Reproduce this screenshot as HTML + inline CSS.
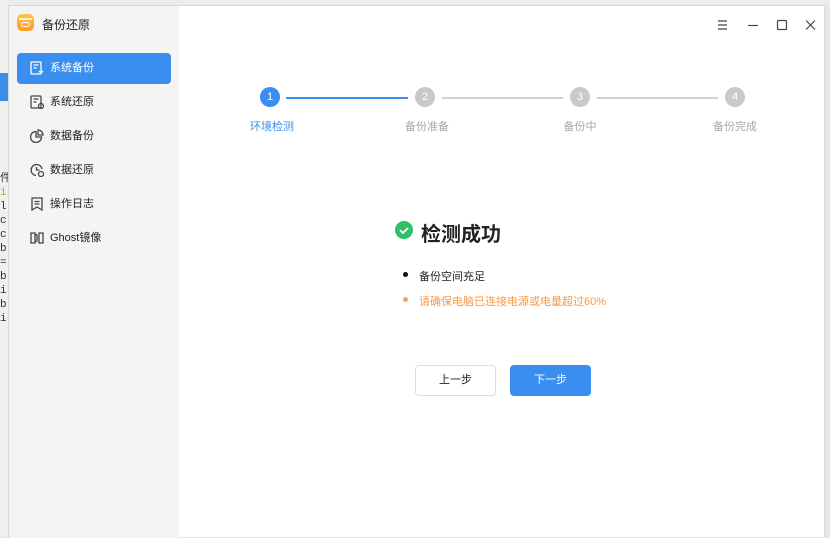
<!DOCTYPE html>
<html><head><meta charset="utf-8"><style>
*{margin:0;padding:0;box-sizing:border-box}
body{width:830px;height:537px;overflow:hidden;background:#e6e6e6;position:relative;font-family:"Liberation Sans","Noto Sans CJK SC",sans-serif}
.bg1{position:absolute;left:0;top:0;width:830px;height:5px;background:#ececec}
.bg2{position:absolute;left:0;top:0;width:8px;height:537px;background:#f0f0f0}
.bgblue{position:absolute;left:0;top:73px;width:8px;height:28px;background:#3a8ee6}
.term{position:absolute;left:0;top:172px;font:11px "Liberation Mono",monospace;color:#333;line-height:14px;width:8px;overflow:hidden}
.win{position:absolute;left:8px;top:5px;width:817px;height:532px;background:#fff;border:1px solid #d8d8d8;border-bottom:none}
.side{position:absolute;left:0;top:0;width:170px;height:532px;background:#f4f4f4}
.logo{position:absolute;left:8px;top:8px;width:17px;height:17px;border-radius:5px;background:linear-gradient(#ffc24d,#ff9a1f)}
.title{position:absolute;left:33px;top:10px;font-size:12px;color:#222}
.item{position:absolute;left:8px;width:154px;height:31px;border-radius:4px;font-size:11px;color:#222;line-height:31px;padding-left:33px}
.item.act{background:#3a8ef0;color:#fff}
.item svg{position:absolute;left:13px;top:8px}
.step{position:absolute;width:20px;height:20px;border-radius:50%;background:#c9c9c9;color:#fff;font-size:11px;text-align:center;line-height:20px;top:81px}
.lab{position:absolute;top:112px;font-size:11px;color:#a8a8a8;width:80px;text-align:center}
.line{position:absolute;top:91px;height:2px;background:#d0d0d0}
.btn{position:absolute;top:359px;width:81px;height:31px;border-radius:4px;font-size:11px;text-align:center;line-height:29px}
</style></head><body>
<div class="bg1"></div><div class="bg2"></div><div class="bgblue"></div>
<div class="term">件<br><span style="color:#7c0">i</span><br>l<br>c<br>c<br>b<br>=<br>b<br>i<br>b<br>i</div>
<div class="win">
 <div class="side">
  <div class="logo"><div style="position:absolute;left:2px;top:4px;width:13px;height:2px;background:#fff;opacity:.8"></div><div style="position:absolute;left:4px;top:8px;width:9px;height:5px;border:1.5px solid #fff;border-radius:3px"></div></div>
  <div class="title">备份还原</div>
  <div class="item act" style="top:47px"><svg width="14" height="14" fill="none" stroke="#fff" stroke-width="1.3"><rect x="1" y="1" width="10" height="12" rx="1"/><path d="M3.5 4h5M3.5 7h3M9 10l2 2 2-2"/></svg>系统备份</div>
  <div class="item" style="top:81px"><svg width="14" height="14" fill="none" stroke="#444" stroke-width="1.3"><rect x="1" y="1" width="10" height="12" rx="1"/><path d="M3.5 4h5M3.5 7h3"/><circle cx="11" cy="11" r="2.5"/></svg>系统还原</div>
  <div class="item" style="top:115px"><svg width="14" height="14" fill="none" stroke="#444" stroke-width="1.3"><path d="M6 2.5A5.5 5.5 0 1 0 11.5 8H6z"/><path d="M8 1v5h5A5 5 0 0 0 8 1z"/></svg>数据备份</div>
  <div class="item" style="top:149px"><svg width="14" height="14" fill="none" stroke="#444" stroke-width="1.3"><path d="M12 6A5.5 5.5 0 1 0 6 12.5"/><path d="M6.5 4v3h3"/><circle cx="11" cy="11" r="2.5"/></svg>数据还原</div>
  <div class="item" style="top:183px"><svg width="14" height="14" fill="none" stroke="#444" stroke-width="1.3"><path d="M2 1h10v12l-5-3-5 3z"/><path d="M4.5 4.5h5M4.5 7h5"/></svg>操作日志</div>
  <div class="item" style="top:217px"><svg width="14" height="14" fill="none" stroke="#444" stroke-width="1.3"><path d="M1 2h4v10H1zM9 2h4v10H9zM5 3l2 1v6l-2 1"/></svg>Ghost镜像</div>
 </div>
 <svg style="position:absolute;left:708px;top:13px" width="100" height="14" fill="none" stroke="#444" stroke-width="1.2"><path d="M1 2h9M1 6h9M1 10h9"/><path d="M31 6.5h10"/><rect x="60.5" y="1.5" width="9" height="9" rx="1"/><path d="M89 1.5l9 9M98 1.5l-9 9"/></svg>
 <div class="step" style="left:251px;background:#3a8ef0">1</div>
 <div class="line" style="left:277px;width:122px;background:#3a8ef0"></div>
 <div class="step" style="left:406px">2</div>
 <div class="line" style="left:433px;width:121px"></div>
 <div class="step" style="left:561px">3</div>
 <div class="line" style="left:588px;width:121px"></div>
 <div class="step" style="left:716px">4</div>
 <div class="lab" style="left:223px;color:#3a8ef0">环境检测</div>
 <div class="lab" style="left:378px">备份准备</div>
 <div class="lab" style="left:531px">备份中</div>
 <div class="lab" style="left:686px">备份完成</div>
 <div style="position:absolute;left:386px;top:215px;width:18px;height:18px;border-radius:50%;background:#2dc16a"><svg width="18" height="18" fill="none" stroke="#fff" stroke-width="1.8"><path d="M5 9l3 3 5-5"/></svg></div>
 <div style="position:absolute;left:412px;top:212px;font-size:20px;font-weight:bold;color:#222">检测成功</div>
 <div style="position:absolute;left:394px;top:266px;width:5px;height:5px;border-radius:50%;background:#111"></div>
 <div style="position:absolute;left:410px;top:262px;font-size:11px;color:#222">备份空间充足</div>
 <div style="position:absolute;left:394px;top:291px;width:5px;height:5px;border-radius:50%;background:#f7a35c"></div>
 <div style="position:absolute;left:410px;top:287px;font-size:11px;color:#f39a4a">请确保电脑已连接电源或电量超过60%</div>
 <div class="btn" style="left:406px;border:1px solid #ddd;color:#222;background:#fff">上一步</div>
 <div class="btn" style="left:501px;background:#3a8ef0;color:#fff;line-height:31px">下一步</div>
</div>
</body></html>
